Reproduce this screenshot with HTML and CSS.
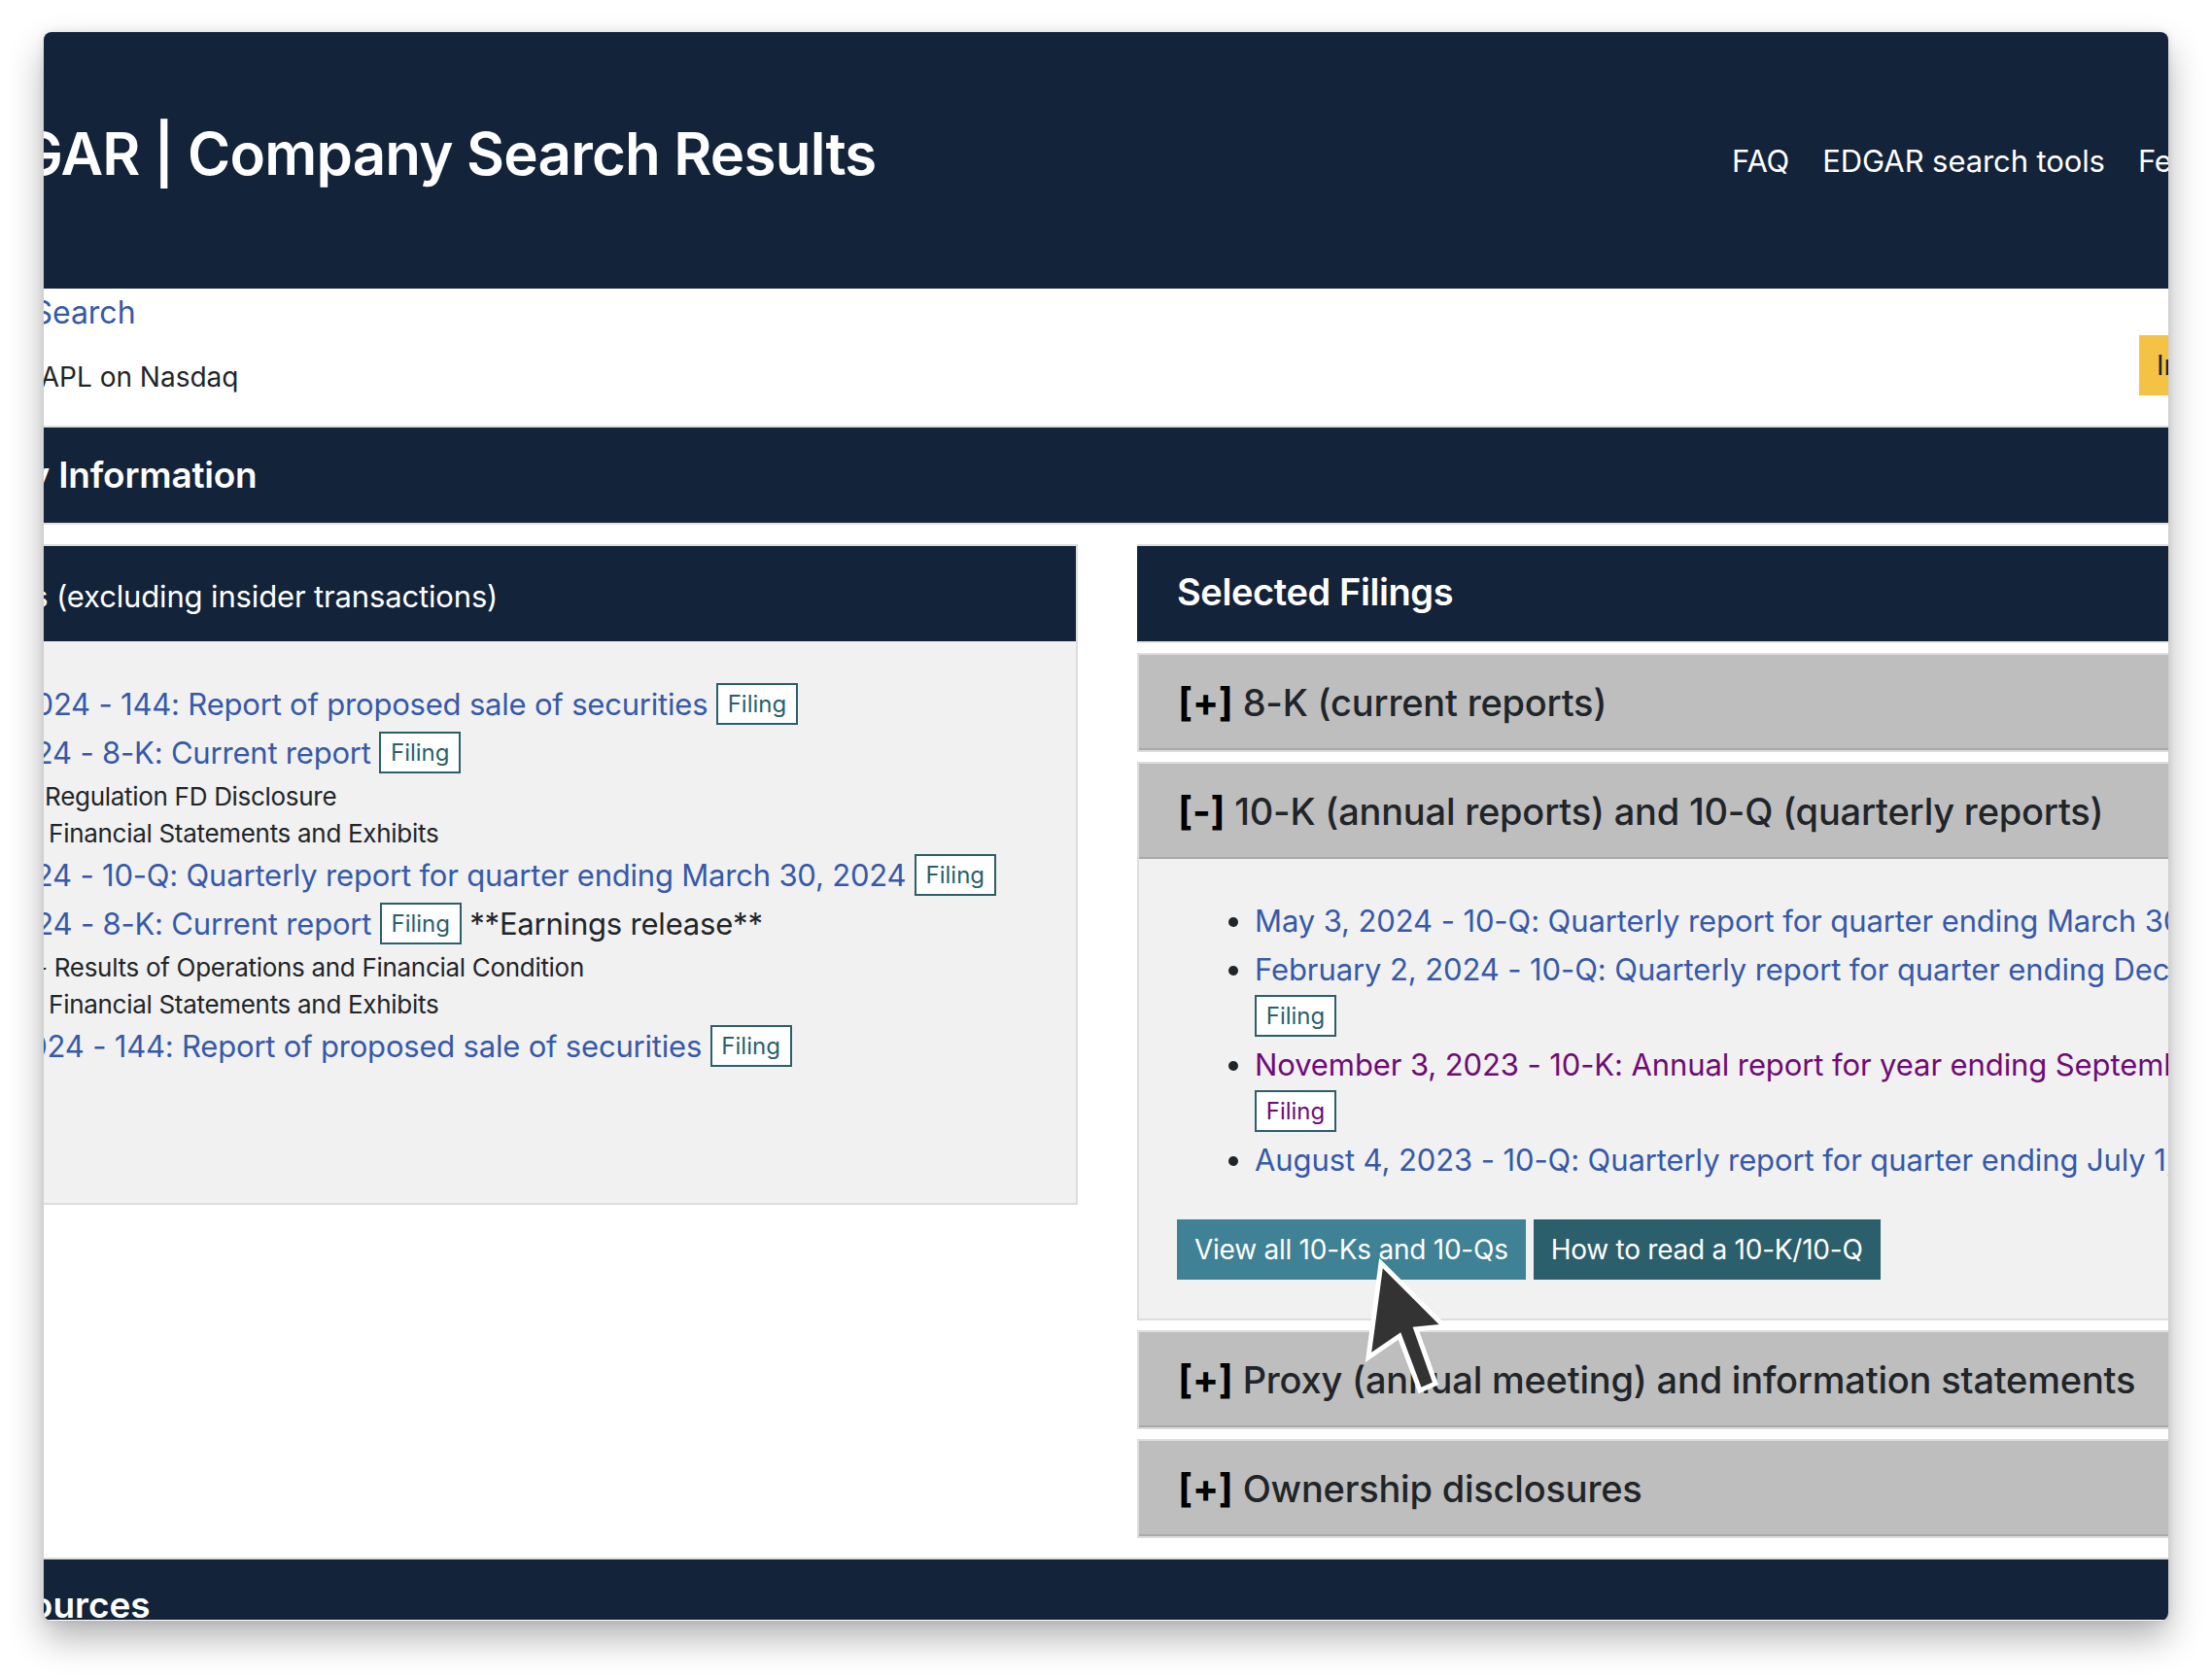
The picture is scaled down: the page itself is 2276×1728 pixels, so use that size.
FILE: index.html
```html
<!DOCTYPE html>
<html lang="en">
<head>
    <meta charset="UTF-8">
    <title>EDGAR | Company Search Results</title>
    <link rel="stylesheet" href="styles.css">
</head>
<body>
<div class="window">
  <div class="page">
    <header class="top">
      <h1 class="title">EDGAR | Company Search Results</h1>
      <nav class="nav">
        <a href="#">FAQ</a>
        <a href="#">EDGAR search tools</a>
        <a href="#">Feedback</a>
      </nav>
    </header>

    <div class="sub">
      <div class="sub-left">
        <a class="link" href="#">New Search</a>
        <div class="ticker">AAPL on Nasdaq</div>
      </div>
      <div><a class="btn-yellow" href="#">Insider transactions</a></div>
    </div>

    <div class="band">Company Information</div>

    <div class="main">
      <section class="latest">
        <h3 class="latest-head">Latest Filings (excluding insider transactions)</h3>
        <ul class="latest-list">
          <li class="row"><a class="link" href="#">May 20, 2024 - 144: Report of proposed sale of securities</a> <a class="badge" href="#">Filing</a></li>
          <li class="row"><a class="link" href="#">May 3, 2024 - 8-K: Current report</a> <a class="badge" href="#">Filing</a></li>
          <li class="item">Item 7.01 - Regulation FD Disclosure</li>
          <li class="item">Item 9.01 - Financial Statements and Exhibits</li>
          <li class="row"><a class="link" href="#">May 3, 2024 - 10-Q: Quarterly report for quarter ending March 30, 2024</a> <a class="badge" href="#">Filing</a></li>
          <li class="row"><a class="link" href="#">May 2, 2024 - 8-K: Current report</a> <a class="badge" href="#">Filing</a> **Earnings release**</li>
          <li class="item">Item 2.02 - Results of Operations and Financial Condition</li>
          <li class="item">Item 9.01 - Financial Statements and Exhibits</li>
          <li class="row"><a class="link" href="#">May 10, 2024 - 144: Report of proposed sale of securities</a> <a class="badge" href="#">Filing</a></li>
        </ul>
      </section>

      <section class="selected">
        <h3 class="selected-head">Selected Filings</h3>

        <div class="acc">
          <div class="acc-head"><b>[+]</b> 8-K (current reports)</div>
        </div>

        <div class="acc">
          <div class="acc-head"><b>[-]</b> 10-K (annual reports) and 10-Q (quarterly reports)</div>
          <div class="acc-body">
            <ul class="filings">
              <li><a class="link" href="#">May 3, 2024 - 10-Q: Quarterly report for quarter ending March 30, 2024</a> <a class="badge" href="#">Filing</a></li>
              <li><a class="link" href="#">February 2, 2024 - 10-Q: Quarterly report for quarter ending December 30, 2023</a> <a class="badge" href="#">Filing</a></li>
              <li><a class="link visited" href="#">November 3, 2023 - 10-K: Annual report for year ending September 30, 2023</a> <a class="badge visited" href="#">Filing</a></li>
              <li><a class="link" href="#">August 4, 2023 - 10-Q: Quarterly report for quarter ending July 1, 2023</a> <a class="badge" href="#">Filing</a></li>
            </ul>
            <div class="actions">
              <a class="btn btn-light" href="#">View all 10-Ks and 10-Qs</a>
              <a class="btn btn-dark" href="#">How to read a 10-K/10-Q</a>
            </div>
          </div>
        </div>

        <div class="acc">
          <div class="acc-head"><b>[+]</b> Proxy (annual meeting) and information statements</div>
        </div>

        <div class="acc">
          <div class="acc-head"><b>[+]</b> Ownership disclosures</div>
        </div>
      </section>
    </div>

    <div class="foot">Resources</div>
  </div>

  <svg class="cursor" width="100" height="150" viewBox="0 0 100 150">
    <polygon points="16,9 81,74 52,77 72,133 56,140 35,84 3,106" fill="#333" stroke="#fff" stroke-width="5" stroke-linejoin="miter" stroke-miterlimit="10"/>
  </svg>
</div>
</body>
</html>
```

FILE: styles.css
```css
body {
    box-sizing: border-box;
    min-height: 1728px;
    margin: 0;
    padding: 33px 45px 60px;
    background-color: #fff;
    font-family: Inter, "Noto Sans", sans-serif;
    color: #212529;
}
a {
    text-decoration: none;
}
.window {
    position: relative;
    width: 2186px;
    height: 1635px;
    overflow: hidden;
    border-radius: 8px;
    background-color: #fff;
    box-shadow: 0 18px 36px rgba(0, 0, 0, 0.3), 0 0 8px rgba(0, 0, 0, 0.1);
}
/* the shot is scrolled sideways, so the page starts left of the window */
.page {
    width: 2840px;
    margin-left: -200px;
}

/* top bar */
.top {
    display: grid;
    grid-template-columns: 1937px auto;
    align-items: center;
    height: 264px;
    background-color: #13233a;
    color: #fff;
}
.title {
    margin: 0 0 14px;
    padding-left: 97px;
    font-size: 60px;
    font-weight: 600;
    letter-spacing: -0.8px;
    white-space: nowrap;
}
.nav {
    display: flex;
    gap: 34px;
    font-size: 31px;
    letter-spacing: -0.1px;
}
.nav a {
    color: #fff;
}

/* search row */
.sub {
    display: grid;
    grid-template-columns: 2356px auto;
    height: 141px;
    border-bottom: 2px solid #e0e0e0;
}
.sub-left {
    font-size: 32px;
    line-height: 50px;
}
.sub-left > .link {
    display: block;
    padding-left: 111px;
}
.ticker {
    margin-top: 16px;
    padding-left: 177px;
    font-size: 28px;
}
.btn-yellow {
    display: block;
    width: 300px;
    height: 62px;
    margin-top: 48px;
    padding-left: 18px;
    background-color: #f4c244;
    color: #212529;
    font-size: 28px;
    line-height: 62px;
    white-space: nowrap;
}

/* company information */
.band {
    height: 98px;
    padding-left: 36px;
    border-bottom: 2px solid #e0e0e0;
    background-color: #13233a;
    color: #fff;
    font-size: 37px;
    font-weight: 600;
    letter-spacing: -0.2px;
    line-height: 98px;
}
.link {
    color: #3659a8;
}
.visited {
    color: #6f0b75;
}
.badge {
    display: inline-block;
    box-sizing: border-box;
    width: 84px;
    height: 43px;
    border: 2px solid #2c5f6c;
    background-color: #fff;
    color: #2c5f6c;
    font-size: 24px;
    letter-spacing: 0;
    line-height: 39px;
    text-align: center;
    vertical-align: 3px;
}
.badge.visited {
    color: #6f0b75;
}

.main {
    display: grid;
    grid-template-columns: 1264px 1320px;
    column-gap: 61px;
    align-items: start;
    padding: 20px 0;
}

/* left panel */
.latest {
    box-sizing: border-box;
    height: 680px;
    border: 2px solid #ddd;
    background-color: #f1f1f1;
}
.latest-head {
    height: 98px;
    margin: 0;
    padding-left: 12px;
    background-color: #13233a;
    color: #fff;
    font-size: 31px;
    font-weight: 400;
    letter-spacing: -0.15px;
    line-height: 104px;
    white-space: nowrap;
}
.latest-list {
    margin: 0;
    padding: 41px 0 0;
    list-style: none;
}
.row {
    margin-bottom: 2px;
    padding-left: 45px;
    font-size: 31px;
    letter-spacing: -0.2px;
    line-height: 48px;
    white-space: nowrap;
}
.item {
    padding-left: 70px;
    font-size: 26px;
    letter-spacing: -0.3px;
    line-height: 38px;
    white-space: nowrap;
}

/* right panel */
.selected-head {
    height: 98px;
    margin: 0 0 10px;
    padding-left: 41px;
    border-top: 2px solid #ddd;
    border-bottom: 2px solid #e8e8e8;
    background-color: #13233a;
    color: #fff;
    font-size: 38px;
    font-weight: 600;
    letter-spacing: -0.4px;
    line-height: 94px;
}
.acc {
    margin-bottom: 10px;
    border: 2px solid #ddd;
}
.acc:last-child {
    margin-bottom: 0;
}
.acc-head {
    box-sizing: border-box;
    height: 98px;
    padding-left: 40px;
    border-bottom: 2px solid #a9a9a9;
    background-color: #bebebe;
    font-size: 38px;
    font-weight: 500;
    letter-spacing: -0.2px;
    line-height: 98px;
    white-space: nowrap;
}
.acc-head b {
    color: #000;
    font-size: 40px;
    font-weight: 700;
}
.acc-body {
    padding: 40px 0 40px 39px;
    background-color: #f1f1f1;
}
.filings {
    margin: 0 0 37px;
    padding-left: 80px;
    font-size: 31px;
    letter-spacing: -0.1px;
    line-height: 48px;
}
.filings li {
    margin-bottom: 2px;
}
.filings .link {
    white-space: nowrap;
}
.actions {
    display: flex;
    gap: 8px;
}
.btn {
    height: 62px;
    padding: 0 18px;
    color: #fff;
    font-size: 28px;
    letter-spacing: -0.25px;
    line-height: 62px;
}
.btn-light {
    background-color: #3f8195;
}
.btn-dark {
    background-color: #2c5f6c;
}

/* clipped section bar at the bottom */
.foot {
    height: 62px;
    overflow: hidden;
    padding-left: 121px;
    border-top: 2px solid #d9dcdc;
    background-color: #13233a;
    color: #fff;
    font-size: 37px;
    font-weight: 600;
    line-height: 94px;
}

/* mouse pointer lying over the button */
.cursor {
    position: absolute;
    left: 1360px;
    top: 1258px;
}
```
